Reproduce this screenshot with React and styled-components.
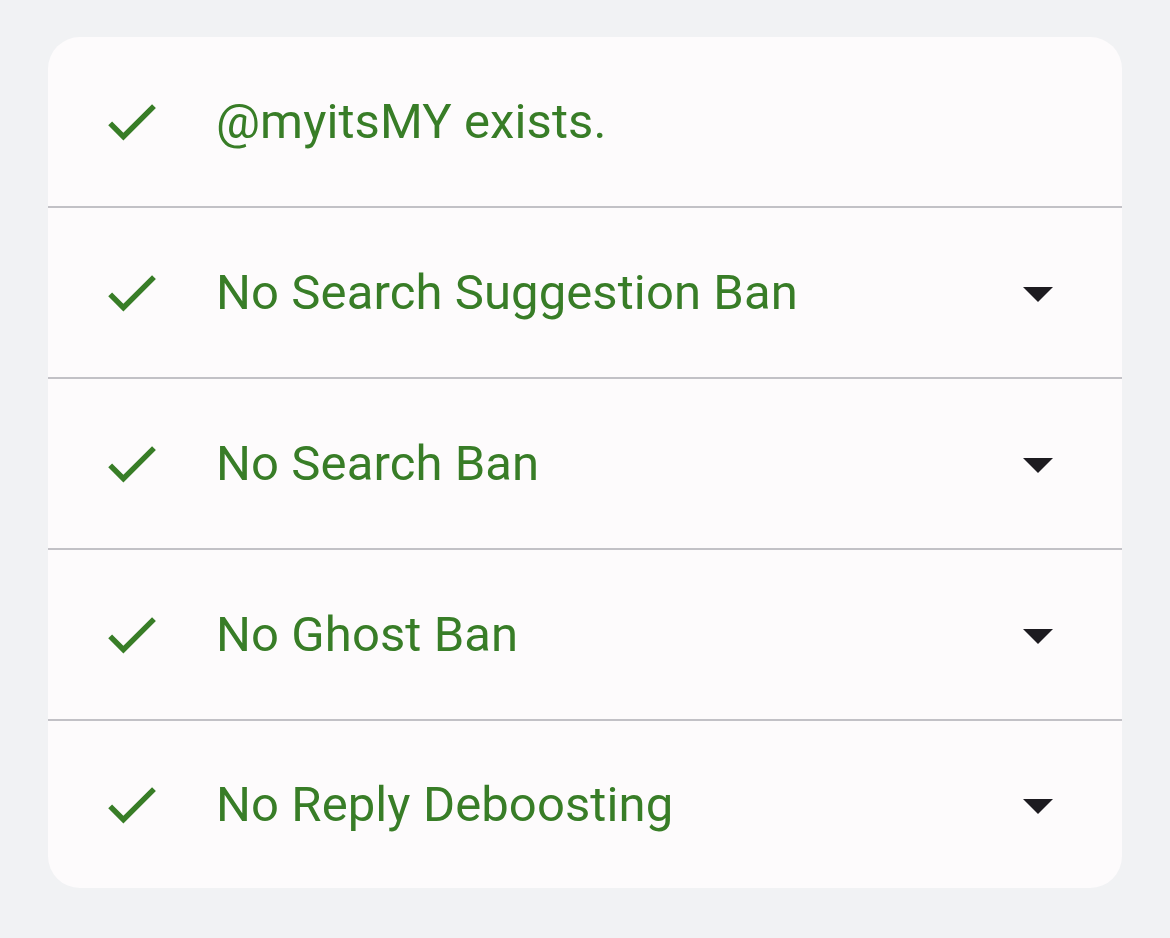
import styled, { createGlobalStyle } from "styled-components";

const Global = createGlobalStyle`
  html, body {
    margin: 0;
    padding: 0;
    background: #f1f2f4;
  }
  body {
    font-family: Roboto, "Noto Sans", sans-serif;
  }
`;

const Page = styled.div`
  padding: 37px 48px 50px;
`;

const Card = styled.div`
  background: #fdfbfc;
  border-radius: 32px;
  overflow: hidden;
`;

const Row = styled.div`
  display: flex;
  align-items: center;
  height: 169px;
  padding: 0 48px 0 51px;
  border-top: ${(p) => (p.$first ? "none" : "2px solid #c2c1c6")};

  &:last-child {
    height: 167px;
  }
`;

const Label = styled.span`
  flex: 1;
  margin-left: 52px;
  color: #387d27;
  font-size: 49px;
  font-weight: 400;
  letter-spacing: 0.1px;
`;

const Check = () => (
  <svg width="65" height="65" viewBox="0 0 24 24" fill="#387d27">
    <path d="M9 16.17L4.83 12l-1.42 1.41L9 19 21 7l-1.41-1.41z" />
  </svg>
);

const Caret = () => (
  <svg width="72" height="72" viewBox="0 0 24 24" fill="#1d1b20">
    <path d="M7 10l5 5 5-5z" />
  </svg>
);

const items = [
  { text: "@myitsMY exists.", expand: false },
  { text: "No Search Suggestion Ban", expand: true },
  { text: "No Search Ban", expand: true },
  { text: "No Ghost Ban", expand: true },
  { text: "No Reply Deboosting", expand: true },
];

export default function App() {
  return (
    <>
      <Global />
      <Page>
        <Card>
          {items.map((item, i) => (
            <Row key={item.text} $first={i === 0}>
              <Check />
              <Label>{item.text}</Label>
              {item.expand && <Caret />}
            </Row>
          ))}
        </Card>
      </Page>
    </>
  );
}
